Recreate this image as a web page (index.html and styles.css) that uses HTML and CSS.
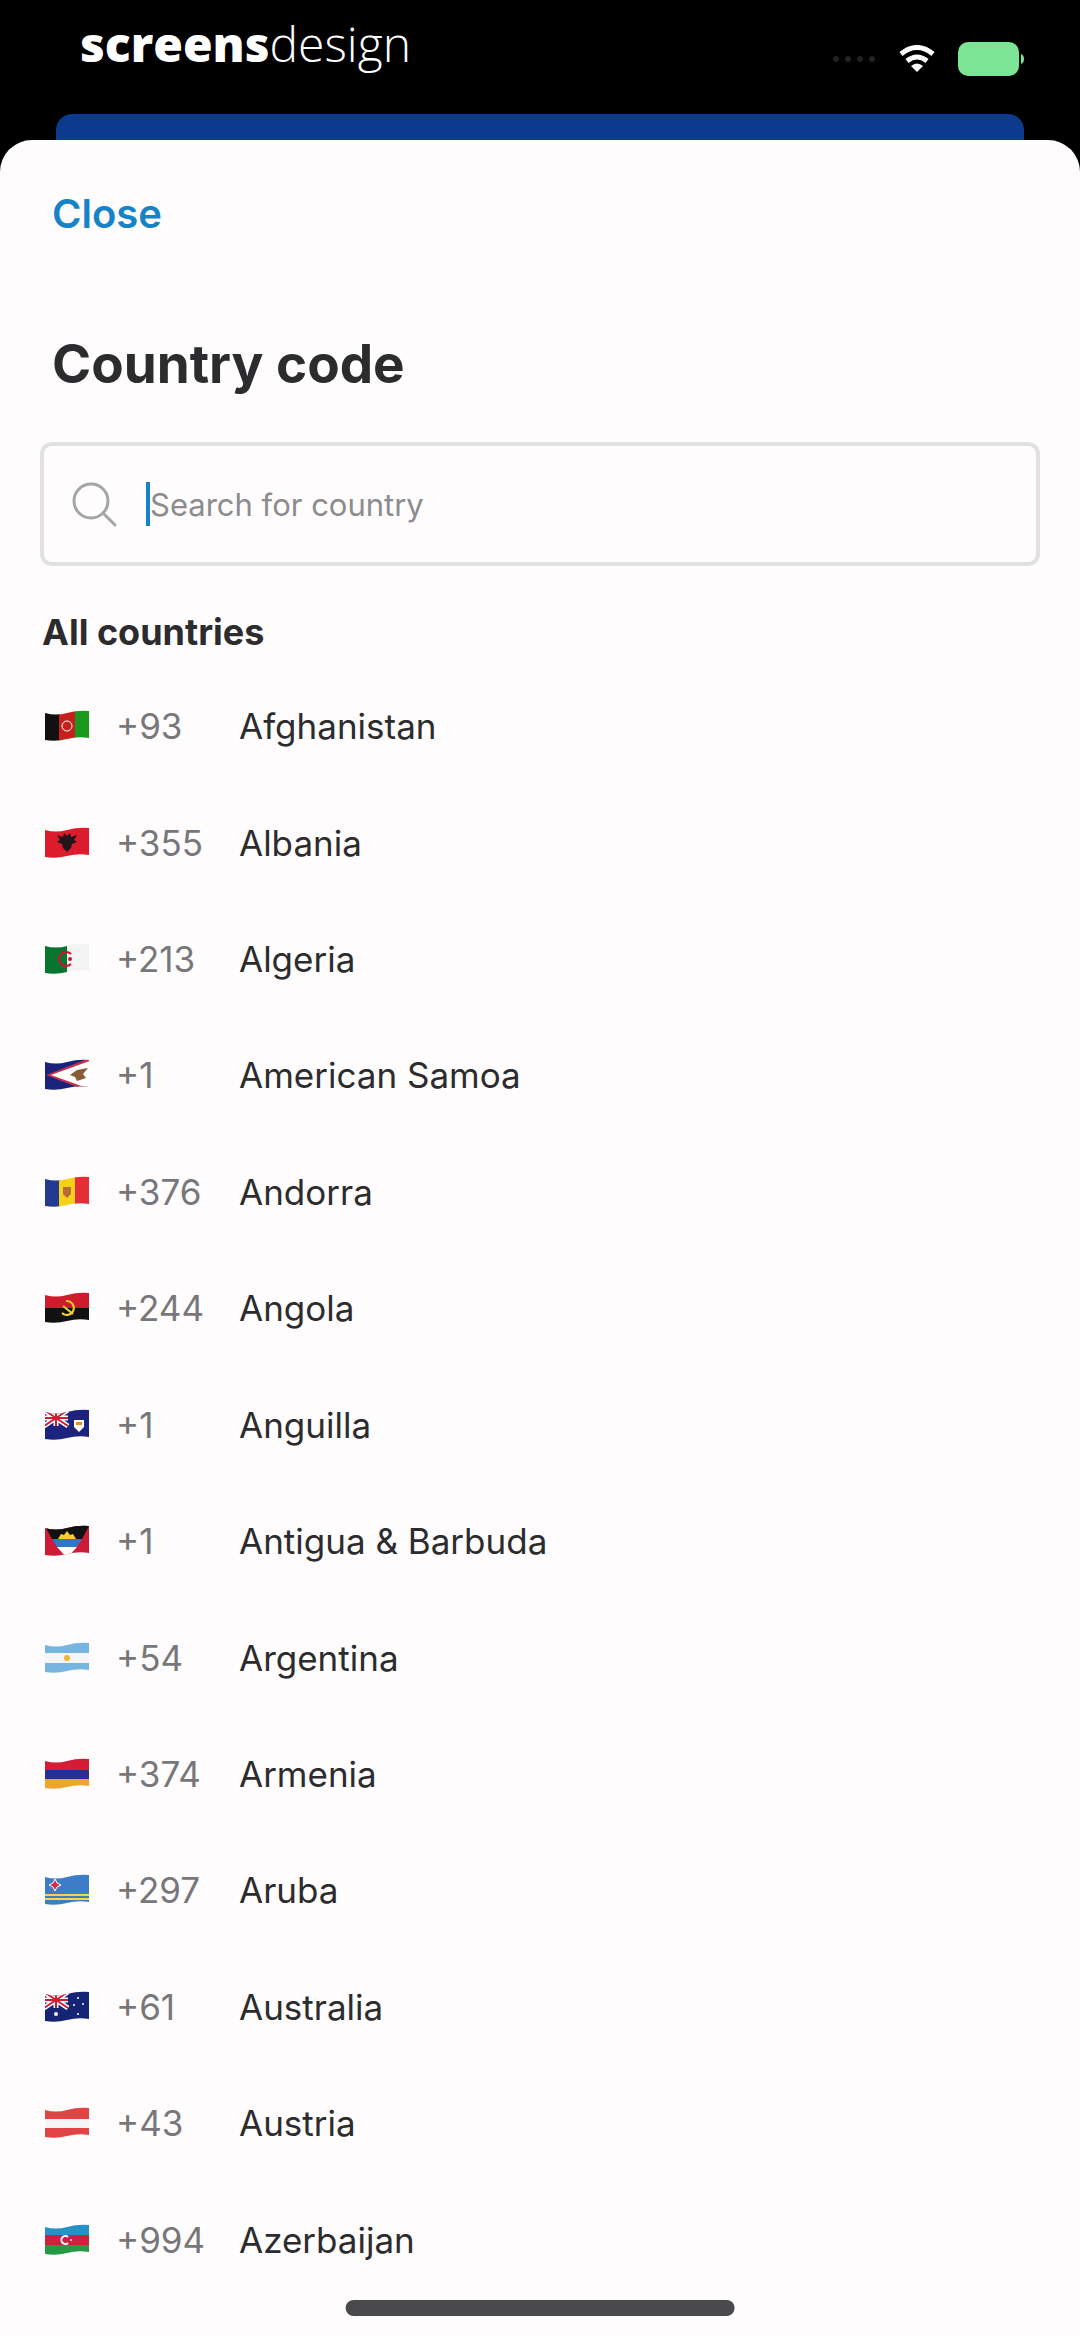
FILE: index.html
```html
<!DOCTYPE html>
<html lang="en">
<head>
<meta charset="UTF-8">
<meta name="viewport" content="width=device-width, initial-scale=1.0">
<link rel="stylesheet" href="styles.css">
<title>Country code</title>
</head>
<body>
<!-- waving outline shared by all flags -->
<svg class="defs" width="0" height="0" aria-hidden="true">
<clipPath id="wave"><path d="M1 4 Q12 7 23 4 T45 2 V29 Q34 27 23 30 T1 31 Z"/></clipPath>
</svg>

<header class="status-bar">
<div class="brand"><b>screens</b>design</div>
<div class="status-icons">
<svg width="44" height="8" viewBox="0 0 44 8" fill="#222"><circle cx="4" cy="4" r="3"/><circle cx="16" cy="4" r="3"/><circle cx="28" cy="4" r="3"/><circle cx="40" cy="4" r="3"/></svg>
<svg width="38" height="28" viewBox="0 0 38 28" fill="none" stroke="#fff" stroke-width="5"><path d="M3 9 Q19 -4 35 9"/><path d="M9 16 Q19 8 29 16"/><path d="M19 27 L13 21 Q19 16 25 21 Z" fill="#fff" stroke="none"/></svg>
<svg width="66" height="34" viewBox="0 0 66 34"><rect width="61" height="34" rx="10" fill="#7be495"/><path d="M63 12 Q66 13 66 17 T63 22 Z" fill="#7be495"/></svg>
</div>
</header>
<div class="back-card"></div>

<main class="sheet">
<button class="close" type="button">Close</button>
<h1>Country code</h1>
<div class="search">
<svg width="48" height="48" viewBox="0 0 48 48" fill="none" stroke="#a3a6a6" stroke-width="3" stroke-linecap="round"><circle cx="21" cy="21" r="17"/><path d="M34 34 L45 45"/></svg>
<span class="caret"></span>
<input type="text" id="search" placeholder="Search for country" aria-label="Search for country">
</div>
<h2>All countries</h2>
<ul class="list">
<li><button class="country" type="button">
<svg class="flag" viewBox="0 0 46 34"><g clip-path="url(#wave)"><path fill="#111" d="M0 0h16v34H0z"/><path fill="#c5201c" d="M15 0h16v34H15z"/><path fill="#18981d" d="M31 0h15v34H31z"/><circle cx="23" cy="17" r="5" fill="none" stroke="#fff" stroke-width="1"/></g></svg>
<span class="code">+93</span><span>Afghanistan</span></button></li>
<li><button class="country" type="button">
<svg class="flag" viewBox="0 0 46 34"><g clip-path="url(#wave)"><path fill="#dc1c2c" d="M0 0h46v34H0z"/><path fill="#23151a" d="M23 10l3-3 1 4 6-2-3 5 3 2-5 2-1 4-4 4-4-4-1-4-5-2 3-2-3-5 6 2 1-4z"/></g></svg>
<span class="code">+355</span><span>Albania</span></button></li>
<li><button class="country" type="button">
<svg class="flag" viewBox="0 0 46 34"><g clip-path="url(#wave)"><path fill="#f3f3f3" d="M0 0h46v34H0z"/><path fill="#08752f" d="M0 0h23v34H0z"/><path fill="none" stroke="#d21034" stroke-width="2" d="M27 12a7 7 0 1 0 0 10"/><circle cx="26" cy="17" r="2" fill="#d21034"/></g></svg>
<span class="code">+213</span><span>Algeria</span></button></li>
<li><button class="country" type="button">
<svg class="flag" viewBox="0 0 46 34"><g clip-path="url(#wave)"><path fill="#1a237b" d="M0 0h46v34H0z"/><path fill="#c8304a" d="M46 0L2 17l44 17z"/><path fill="#fff" d="M46 3L7 17l39 14z"/><path fill="#8a5a36" d="M26 17l7-5 11-2-5 6 3 4-9 3-2-4z"/></g></svg>
<span class="code">+1</span><span>American Samoa</span></button></li>
<li><button class="country" type="button">
<svg class="flag" viewBox="0 0 46 34"><g clip-path="url(#wave)"><path fill="#233a91" d="M0 0h16v34H0z"/><path fill="#f7d117" d="M15 0h16v34H15z"/><path fill="#e52d38" d="M31 0h15v34H31z"/><path fill="#b86a38" d="M19 12h8v7l-4 4-4-4z"/></g></svg>
<span class="code">+376</span><span>Andorra</span></button></li>
<li><button class="country" type="button">
<svg class="flag" viewBox="0 0 46 34"><g clip-path="url(#wave)"><path fill="#cf1c2c" d="M0 0h46v17H0z"/><path fill="#111" d="M0 17h46v17H0z"/><path fill="none" stroke="#f6cf2b" stroke-width="2" d="M22 10a7 7 0 1 1-4 12M19 15l10 8"/></g></svg>
<span class="code">+244</span><span>Angola</span></button></li>
<li><button class="country" type="button">
<svg class="flag" viewBox="0 0 46 34"><g clip-path="url(#wave)"><path fill="#1b237e" d="M0 0h46v34H0z"/><path stroke="#fff" stroke-width="5" d="M0 2l24 16M24 2L0 18M12 0v18M0 10h24"/><path stroke="#d01c35" stroke-width="2" d="M0 2l24 16M24 2L0 18M12 0v18M0 10h24"/><path fill="#fff" d="M30 12h10v7l-5 5-5-5z"/><path fill="#e88a2d" d="M32 14h6v3h-6z"/></g></svg>
<span class="code">+1</span><span>Anguilla</span></button></li>
<li><button class="country" type="button">
<svg class="flag" viewBox="0 0 46 34"><g clip-path="url(#wave)"><path fill="#ce1c36" d="M0 0h46v34H0z"/><path fill="#111" d="M0 0h46L38 15H8z"/><path fill="#3176c9" d="M8 15h30l-5 8H13z"/><path fill="#fff" d="M13 23h20L23 34z"/><path fill="#f8ce2a" d="M14 15l3-5 3 1 3-4 3 4 3-1 3 5z"/></g></svg>
<span class="code">+1</span><span>Antigua &amp; Barbuda</span></button></li>
<li><button class="country" type="button">
<svg class="flag" viewBox="0 0 46 34"><g clip-path="url(#wave)"><path fill="#75b5df" d="M0 0h46v34H0z"/><path fill="#f5f5f5" d="M0 12h46v10H0z"/><circle cx="23" cy="17" r="3" fill="#efb335"/></g></svg>
<span class="code">+54</span><span>Argentina</span></button></li>
<li><button class="country" type="button">
<svg class="flag" viewBox="0 0 46 34"><g clip-path="url(#wave)"><path fill="#d51c36" d="M0 0h46v13H0z"/><path fill="#272f93" d="M0 13h46v9H0z"/><path fill="#f0a42a" d="M0 22h46v12H0z"/></g></svg>
<span class="code">+374</span><span>Armenia</span></button></li>
<li><button class="country" type="button">
<svg class="flag" viewBox="0 0 46 34"><g clip-path="url(#wave)"><path fill="#3d7dc8" d="M0 0h46v34H0z"/><path fill="#f4d64c" d="M0 21h46v2H0zM0 25h46v2H0z"/><path fill="#d22c40" stroke="#fff" d="M11 6l2 4 4 2-4 2-2 4-2-4-4-2 4-2z"/></g></svg>
<span class="code">+297</span><span>Aruba</span></button></li>
<li><button class="country" type="button">
<svg class="flag" viewBox="0 0 46 34"><g clip-path="url(#wave)"><path fill="#152474" d="M0 0h46v34H0z"/><path stroke="#fff" stroke-width="5" d="M0 2l24 16M24 2L0 18M12 0v18M0 10h24"/><path stroke="#d01c35" stroke-width="2" d="M0 2l24 16M24 2L0 18M12 0v18M0 10h24"/><g fill="#fff"><circle cx="12" cy="24" r="2"/><circle cx="34" cy="8" r="1"/><circle cx="30" cy="15" r="1"/><circle cx="39" cy="14" r="1"/><circle cx="34" cy="24" r="1"/></g></g></svg>
<span class="code">+61</span><span>Australia</span></button></li>
<li><button class="country" type="button">
<svg class="flag" viewBox="0 0 46 34"><g clip-path="url(#wave)"><path fill="#e04445" d="M0 0h46v34H0z"/><path fill="#f5f5f5" d="M0 13h46v9H0z"/></g></svg>
<span class="code">+43</span><span>Austria</span></button></li>
<li><button class="country" type="button">
<svg class="flag" viewBox="0 0 46 34"><g clip-path="url(#wave)"><path fill="#2592c5" d="M0 0h46v13H0z"/><path fill="#cf203c" d="M0 12h46v10H0z"/><path fill="#279846" d="M0 22h46v12H0z"/><path fill="none" stroke="#fff" stroke-width="2" d="M24 14a4 4 0 1 0 0 6"/><circle cx="27" cy="17" r="1" fill="#fff"/></g></svg>
<span class="code">+994</span><span>Azerbaijan</span></button></li>
</ul>
</main>
<div class="home-indicator"></div>
</body>
</html>
```

FILE: styles.css
```css
:root {
    --ink: #2c2c2e;
    --muted: #77777a;
    --blue: #1683c7;
}

* {
    box-sizing: border-box;
}

body {
    margin: 0;
    min-height: 100vh;
    display: flex;
    flex-direction: column;
    background-color: #000;
    color: var(--ink);
    font-family: Inter, "Noto Sans", sans-serif;
}

.defs {
    position: absolute;
}

.status-bar {
    height: 114px;
    padding: 18px 56px 0 80px;
    display: flex;
    justify-content: space-between;
    align-items: flex-start;
    color: #fff;
}

.brand {
    font-family: "Open Sans", sans-serif;
    font-size: 48px;
    line-height: 52px;
    font-weight: 300;
}

.brand b {
    font-weight: 800;
}

.status-icons {
    height: 82px;
    display: flex;
    align-items: center;
    gap: 22px;
}

.back-card {
    height: 60px;
    margin: 0 56px -34px;
    border-radius: 16px 16px 0 0;
    background-color: #0c3a8c;
}

.sheet {
    flex: 1;
    display: flex;
    flex-direction: column;
    padding: 50px 40px 38px;
    border-radius: 32px 32px 0 0;
    background-color: #fefcfd;
}

button {
    border: 0;
    padding: 0;
    background: none;
    color: inherit;
    font-family: inherit;
    text-align: left;
}

.close {
    align-self: flex-start;
    margin-left: 12px;
    font-size: 40px;
    line-height: 48px;
    font-weight: 600;
    color: var(--blue);
}

h1 {
    margin: 90px 12px 42px;
    font-size: 53px;
    line-height: 72px;
    font-weight: 700;
}

.search {
    height: 124px;
    padding: 0 26px;
    display: flex;
    align-items: center;
    border: 4px solid #e2e1e2;
    border-radius: 12px;
}

.caret {
    width: 4px;
    height: 44px;
    margin-left: 28px;
    background-color: var(--blue);
}

.search input {
    flex: 1;
    min-width: 0;
    padding: 0;
    border: 0;
    outline: 0;
    background: none;
    color: var(--ink);
    font-family: inherit;
    font-size: 31px;
}

.search input::placeholder {
    color: #8c8c8f;
    opacity: 1;
}

h2 {
    margin: 42px 2px 12px;
    font-size: 36px;
    line-height: 48px;
    font-weight: 700;
}

.list {
    flex: 1;
    display: grid;
    grid-auto-rows: 1fr;
    margin: 0;
    padding: 0 4px;
    list-style: none;
}

.country {
    width: 100%;
    height: 100%;
    display: grid;
    grid-template-columns: 72px 123px 1fr;
    align-items: center;
    font-size: 35px;
    line-height: 44px;
}

.flag {
    width: 46px;
    height: 34px;
}

.code {
    color: var(--muted);
}

.home-indicator {
    position: fixed;
    left: 50%;
    bottom: 20px;
    width: 36%;
    height: 16px;
    border-radius: 8px;
    background-color: #4a494b;
    transform: translateX(-50%);
}
```
